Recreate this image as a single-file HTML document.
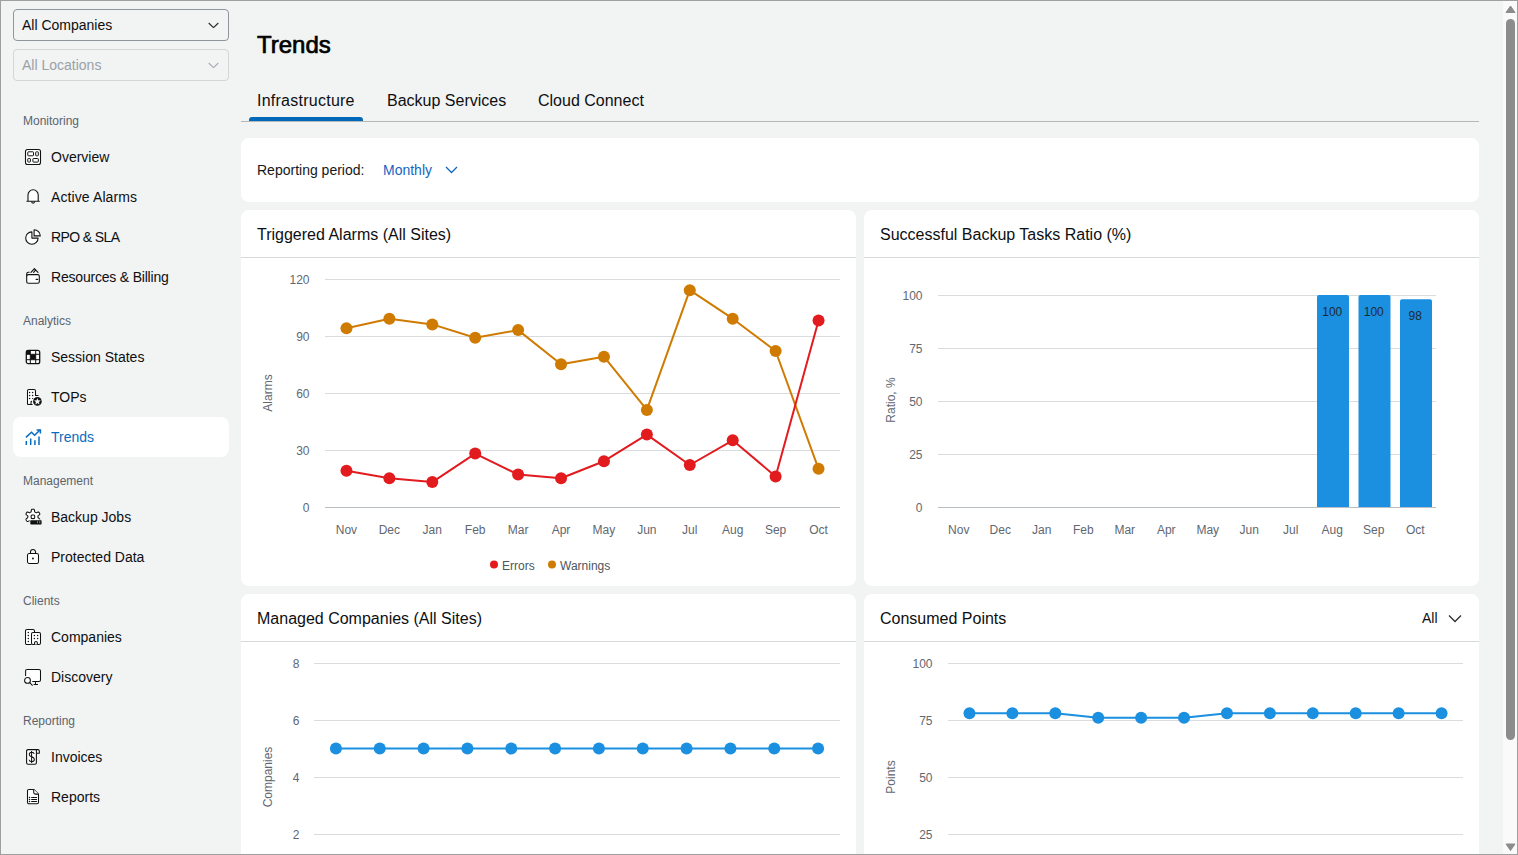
<!DOCTYPE html>
<html><head><meta charset="utf-8"><title>Trends</title>
<style>
html,body{margin:0;padding:0;}
body{width:1518px;height:855px;overflow:hidden;background:#f2f3f3;font-family:"Liberation Sans", sans-serif;color:#0d0f11;position:relative;}
.abs{position:absolute;}
.frame{position:absolute;left:0;top:0;width:1518px;height:855px;box-sizing:border-box;border:1px solid #9f9f9f;pointer-events:none;z-index:10;}
.sb{position:absolute;left:1503px;top:1px;width:14px;height:853px;background:#fafafa;}
.thumb{position:absolute;left:3px;top:18px;width:9px;height:721px;background:#8c8c8c;border-radius:5px;}
.dd{position:absolute;left:13px;width:216px;height:32px;box-sizing:border-box;border:1px solid #8f969b;border-radius:4px;font-size:14px;}
.dd span{position:absolute;left:8px;top:7px;line-height:16px;}
.dd svg{position:absolute;left:194px;top:11px;}
.hd{position:absolute;left:23px;height:20px;line-height:22px;font-size:12px;color:#5b646d;}
.it{position:absolute;left:13px;width:216px;height:40px;font-size:14px;color:#0d0f11;border-radius:8px;}
.it.act{background:#fff;color:#0a6cbf;}
.it .ic{position:absolute;left:12px;top:12px;overflow:visible;}
.it span{position:absolute;left:38px;top:11px;line-height:18px;}
.card{position:absolute;background:#fff;border-radius:8px;}
.card .hdr{position:absolute;left:0;top:0;right:0;height:47px;border-bottom:1px solid #d6dadd;}
.card .ttl{position:absolute;left:16px;top:16px;font-size:16px;line-height:18px;color:#0d0f11;}
.ax{font-family:"Liberation Sans", sans-serif;font-size:12px;fill:#5f6771;}
.lg{font-family:"Liberation Sans", sans-serif;font-size:12px;fill:#4d5560;}
.bl{font-family:"Liberation Sans", sans-serif;font-size:12px;fill:#1f2a36;}
.tab{position:absolute;top:91px;font-size:16px;line-height:20px;color:#0d0f11;}
</style></head>
<body>
<!-- sidebar -->
<div class="dd" style="top:9px"><span>All Companies</span><svg width="12" height="7" viewBox="0 0 12 7"><path d="M0.7,2 L5.5,6.6 L10.3,2" fill="none" stroke="#2a2f33" stroke-width="1.2"/></svg></div>
<div class="dd" style="top:49px;border-color:#d2d6d9;color:#9aa1a7"><span>All Locations</span><svg width="12" height="7" viewBox="0 0 12 7"><path d="M0.7,2 L5.5,6.6 L10.3,2" fill="none" stroke="#a9afb4" stroke-width="1.2"/></svg></div>
<div class="hd" style="top:110px">Monitoring</div>
<div class="it" style="top:137px"><svg class="ic" width="16" height="16" viewBox="0 0 16 16"><rect x="0.5" y="0.5" width="15" height="15" rx="2" fill="#fff" stroke="#111" stroke-width="1.1"/><rect x="2.8" y="2.8" width="5.7" height="4" rx="0.6" fill="#fff" stroke="#111"/><rect x="10.7" y="2.8" width="2.6" height="4" rx="0.6" fill="#fff" stroke="#111"/><rect x="2.8" y="9.5" width="2.6" height="3.6" rx="0.6" fill="#fff" stroke="#111"/><rect x="7.9" y="9.5" width="5.4" height="3.6" rx="0.6" fill="#fff" stroke="#111"/></svg><span>Overview</span></div>
<div class="it" style="top:177px"><svg class="ic" width="16" height="16" viewBox="0 0 16 16"><path d="M3,11.4 V5.9 A5.1,5.1 0 0 1 13.2,5.9 V11.4 Q13.2,12.2 14.3,12.2 H1.9 Q3,12.2 3,11.4 Z" fill="#fff" stroke="#111" stroke-width="1.1" stroke-linejoin="round"/><path d="M6.6,12.6 A1.5,1.6 0 0 0 9.6,12.6" fill="none" stroke="#111" stroke-width="1.1"/></svg><span style="letter-spacing:0.1px">Active Alarms</span></div>
<div class="it" style="top:217px"><svg class="ic" width="16" height="16" viewBox="0 0 16 16"><path d="M6.9,2.9 V9.1 H13.1 A6.2,6.2 0 1 1 6.9,2.9 Z" fill="#fff" stroke="#111" stroke-width="1.1" stroke-linejoin="round"/><path d="M9.1,0.7 V6.9 H15.3 A6.2,6.2 0 0 0 9.1,0.7 Z" fill="#fff" stroke="#111" stroke-width="1.1" stroke-linejoin="round"/></svg><span style="letter-spacing:-0.6px">RPO &amp; SLA</span></div>
<div class="it" style="top:257px"><svg class="ic" width="16" height="16" viewBox="0 0 16 16"><rect x="1.7" y="5.6" width="12.6" height="8.7" rx="1.6" fill="#fff" stroke="#111" stroke-width="1.1"/><path d="M1.7,7.2 V5 Q1.7,3.3 3.4,3.3 H4.6" fill="none" stroke="#111" stroke-width="1.1"/><path d="M6,3.3 L9.4,-0.4 L13,3.3 M8.6,3.3 L10.3,1.3" fill="none" stroke="#111" stroke-width="1.1" stroke-linecap="round" stroke-linejoin="round"/><path d="M11.3,10.4 H12.6" stroke="#111" stroke-width="1.3" stroke-linecap="round"/></svg><span style="letter-spacing:-0.2px">Resources &amp; Billing</span></div>
<div class="hd" style="top:310px">Analytics</div>
<div class="it" style="top:337px"><svg class="ic" width="16" height="16" viewBox="0 0 16 16"><rect x="1.3" y="1.3" width="13.4" height="13.4" rx="2" fill="#fff" stroke="#111" stroke-width="1.3"/><rect x="1.3" y="1.3" width="3.9" height="3.9" fill="#111"/><rect x="5.5" y="5.5" width="5" height="5" fill="#111"/><path d="M5.3,1.3 V14.7 M10.7,1.3 V14.7 M1.3,5.3 H14.7 M1.3,10.7 H14.7" stroke="#111" stroke-width="1"/></svg><span>Session States</span></div>
<div class="it" style="top:377px"><svg class="ic" width="16" height="16" viewBox="0 0 16 16"><path d="M2.5,15.5 V2 Q2.5,0.5 4,0.5 H9 Q10.5,0.5 10.5,2 V6.5 H13.5" fill="#fff" stroke="#111" stroke-width="1.05"/><path d="M2.5,15.5 H7.5 M6,15.5 V13.2 Q6,12.3 7,12.3" fill="none" stroke="#111" stroke-width="1.05"/><circle cx="4.6" cy="3.6" r="0.75" fill="#111"/><circle cx="7.6" cy="3.6" r="0.75" fill="#111"/><circle cx="4.6" cy="6.5" r="0.75" fill="#111"/><circle cx="7.6" cy="6.5" r="0.75" fill="#111"/><circle cx="4.6" cy="9.5" r="0.75" fill="#111"/><circle cx="7.6" cy="9.5" r="0.6" fill="#111"/><circle cx="12.4" cy="12.4" r="4.3" fill="#111"/><path d="M12.40,9.40 L13.19,11.51 L15.44,11.61 L13.68,13.02 L14.28,15.19 L12.40,13.95 L10.52,15.19 L11.12,13.02 L9.36,11.61 L11.61,11.51 Z" fill="#fff" stroke="#fff" stroke-width="0.3" stroke-linejoin="round"/></svg><span>TOPs</span></div>
<div class="it act" style="top:417px"><svg class="ic" width="16" height="16" viewBox="0 0 16 16"><path d="M0.9,8.4 L6.5,3.2 L9.6,6.3 L15,1" fill="none" stroke="#0a6cbf" stroke-width="1.5"/><path d="M11.6,0.9 H15.4 V4.6" fill="none" stroke="#0a6cbf" stroke-width="1.5"/><path d="M1.3,12 V16 M5.7,9.4 V16 M9.9,11.2 V16 M14,7.4 V16" stroke="#0a6cbf" stroke-width="1.5"/></svg><span>Trends</span></div>
<div class="hd" style="top:470px">Management</div>
<div class="it" style="top:497px"><svg class="ic" width="16" height="16" viewBox="0 0 16 16"><path d="M7.90,0.15 L8.39,0.17 L8.88,0.27 L9.31,0.60 L9.53,1.61 L9.62,2.63 L9.85,2.98 L10.14,3.16 L10.43,3.33 L10.71,3.49 L11.01,3.65 L11.43,3.67 L12.35,3.25 L13.34,2.93 L13.85,3.14 L14.17,3.51 L14.44,3.93 L14.66,4.36 L14.82,4.83 L14.76,5.37 L13.99,6.07 L13.16,6.65 L12.96,7.03 L12.95,7.37 L12.95,7.70 L12.95,8.03 L12.96,8.37 L13.16,8.75 L13.99,9.33 L14.76,10.03 L14.82,10.57 L14.66,11.04 L14.44,11.47 L14.17,11.89 L13.85,12.26 L13.34,12.47 L12.35,12.15 L11.43,11.73 L11.01,11.75 L10.71,11.91 L10.43,12.07 L10.14,12.24 L9.85,12.42 L9.62,12.77 L9.53,13.79 L9.31,14.80 L8.88,15.13 L8.39,15.23 L7.90,15.25 L7.41,15.23 L6.92,15.13 L6.49,14.80 L6.27,13.79 L6.18,12.77 L5.95,12.42 L5.66,12.24 L5.38,12.07 L5.09,11.91 L4.79,11.75 L4.37,11.73 L3.45,12.15 L2.46,12.47 L1.95,12.26 L1.63,11.89 L1.36,11.48 L1.14,11.04 L0.98,10.57 L1.04,10.03 L1.81,9.33 L2.64,8.75 L2.84,8.37 L2.85,8.03 L2.85,7.70 L2.85,7.37 L2.84,7.03 L2.64,6.65 L1.81,6.07 L1.04,5.37 L0.98,4.83 L1.14,4.36 L1.36,3.92 L1.63,3.51 L1.95,3.14 L2.46,2.93 L3.45,3.25 L4.37,3.67 L4.79,3.65 L5.09,3.49 L5.37,3.33 L5.66,3.16 L5.95,2.98 L6.18,2.63 L6.27,1.61 L6.49,0.60 L6.92,0.27 L7.41,0.17 Z" fill="#fff" stroke="#111" stroke-width="1.05" stroke-linejoin="round"/><rect x="6.1" y="6" width="3.6" height="3.6" rx="1" fill="#fff" stroke="#111" stroke-width="1.05"/><rect x="4.6" y="10.6" width="12.4" height="5.4" rx="0.8" fill="#f2f3f3"/><rect x="5.3" y="11.2" width="11.3" height="4.2" rx="0.6" fill="#111"/><rect x="12.1" y="12.3" width="0.7" height="1.8" fill="#bbb"/><rect x="14.2" y="12.3" width="1.1" height="1.8" fill="#888"/></svg><span>Backup Jobs</span></div>
<div class="it" style="top:537px"><svg class="ic" width="16" height="16" viewBox="0 0 16 16"><rect x="2.5" y="4.5" width="11" height="10" rx="1.7" fill="#fff" stroke="#111" stroke-width="1.05"/><path d="M5.5,4.5 V3 A2.5,2.5 0 0 1 10.5,3 V4.5" fill="none" stroke="#111" stroke-width="1.05"/><circle cx="7.95" cy="9.5" r="0.95" fill="#111"/></svg><span>Protected Data</span></div>
<div class="hd" style="top:590px">Clients</div>
<div class="it" style="top:617px"><svg class="ic" width="16" height="16" viewBox="0 0 16 16"><path d="M6.5,15.5 H2 Q0.5,15.5 0.5,14 V2 Q0.5,0.5 2,0.5 H8 Q9.5,0.5 9.5,2 V3.5" fill="#fff" stroke="#111" stroke-width="1.05"/><rect x="6.5" y="3.5" width="9" height="12" rx="1.5" fill="#fff" stroke="#111" stroke-width="1.05"/><path d="M9.6,15.5 V13.6 Q9.6,12.4 10.95,12.4 Q12.3,12.4 12.3,13.6 V15.5" fill="#fff" stroke="#111" stroke-width="1.05"/><circle cx="3.3" cy="3.6" r="0.75" fill="#111"/><circle cx="3.3" cy="6.6" r="0.75" fill="#111"/><circle cx="3.3" cy="9.6" r="0.75" fill="#111"/><circle cx="3.3" cy="12.6" r="0.75" fill="#111"/><circle cx="9.4" cy="6.6" r="0.75" fill="#111"/><circle cx="12.6" cy="6.6" r="0.75" fill="#111"/><circle cx="9.4" cy="9.6" r="0.75" fill="#111"/><circle cx="12.6" cy="9.6" r="0.75" fill="#111"/></svg><span>Companies</span></div>
<div class="it" style="top:657px"><svg class="ic" width="16" height="16" viewBox="0 0 16 16"><path d="M0.6,7 V2 Q0.6,0.5 2.1,0.5 H14 Q15.5,0.5 15.5,2 V11 Q15.5,12.5 14,12.5 H7.3" fill="#fff" stroke="#111" stroke-width="1.05"/><path d="M10.5,12.5 V15.5 M8.6,15.5 H13" stroke="#111" stroke-width="1.05"/><circle cx="2.5" cy="11.4" r="2.9" fill="#fff" stroke="#111" stroke-width="1.05"/><path d="M4.7,13.6 L7.4,16.3" stroke="#111" stroke-width="1.05" stroke-linecap="round"/></svg><span>Discovery</span></div>
<div class="hd" style="top:710px">Reporting</div>
<div class="it" style="top:737px"><svg class="ic" width="16" height="16" viewBox="0 0 16 16"><path d="M11.4,4.2 V13.8 Q11.4,15.3 9.9,15.3 H3.1 Q1.6,15.3 1.6,13.8 V2.1 Q1.6,0.6 3.1,0.6 H12.8 Q14.3,0.6 14.3,2.1 V4.2 H11.4 V0.6" fill="#fff" stroke="#111" stroke-width="1.1" stroke-linejoin="round"/><path d="M9.2,5 Q8.9,3.3 6.6,3.3 Q4.3,3.3 4.3,5.4 Q4.3,7.1 6.6,7.7 Q9.3,8.3 9.3,10.4 Q9.3,12.6 6.6,12.6 Q4.3,12.6 4.1,10.8 M6.6,1.9 V13.9" fill="none" stroke="#111" stroke-width="1.05"/></svg><span>Invoices</span></div>
<div class="it" style="top:777px"><svg class="ic" width="16" height="16" viewBox="0 0 16 16"><path d="M2.5,2 Q2.5,0.5 4,0.5 H9 L13.5,5 V13.3 Q13.5,14.8 12,14.8 H4 Q2.5,14.8 2.5,13.3 Z" fill="#fff" stroke="#111" stroke-width="1.05" stroke-linejoin="round"/><path d="M8.7,0.5 V3.5 Q8.7,5.1 10.3,5.1 H13.5" fill="#fff" stroke="#111" stroke-width="1.05"/><circle cx="4.5" cy="8.5" r="0.75" fill="#111"/><circle cx="4.5" cy="10.5" r="0.75" fill="#111"/><circle cx="4.5" cy="12.5" r="0.75" fill="#111"/><path d="M6.6,8.5 H11.6 M6.6,10.5 H11.6 M6.6,12.5 H11.6" stroke="#111" stroke-width="1.05" stroke-linecap="round"/></svg><span>Reports</span></div>

<!-- main -->
<div class="abs" style="left:257px;top:31px;font-size:24px;font-weight:normal;line-height:28px;color:#000;-webkit-text-stroke:0.7px #000">Trends</div>
<div class="tab" style="left:257px;letter-spacing:0.25px">Infrastructure</div>
<div class="tab" style="left:387px">Backup Services</div>
<div class="tab" style="left:538px">Cloud Connect</div>
<div class="abs" style="left:241px;top:121px;width:1238px;height:1px;background:#b3b8bb"></div>
<div class="abs" style="left:249px;top:117px;width:114px;height:4px;background:#0068b8;border-radius:3px 3px 0 0"></div>

<div class="card" style="left:241px;top:138px;width:1238px;height:64px">
  <div class="abs" style="left:16px;top:23px;font-size:14px;line-height:18px;color:#15181b">Reporting period:</div>
  <div class="abs" style="left:142px;top:23px;font-size:14px;line-height:18px;color:#1565c0">Monthly</div>
  <svg class="abs" style="left:204px;top:28px" width="13" height="8" viewBox="0 0 13 8"><path d="M1,1 L6.5,6.5 L12,1" fill="none" stroke="#1565c0" stroke-width="1.3"/></svg>
</div>

<div class="card" style="left:241px;top:210px;width:615px;height:376px"><div class="hdr"></div><div class="ttl">Triggered Alarms (All Sites)</div></div>
<div class="card" style="left:864px;top:210px;width:615px;height:376px"><div class="hdr"></div><div class="ttl">Successful Backup Tasks Ratio (%)</div></div>
<div class="card" style="left:241px;top:594px;width:615px;height:300px"><div class="hdr"></div><div class="ttl">Managed Companies (All Sites)</div></div>
<div class="card" style="left:864px;top:594px;width:615px;height:300px"><div class="hdr"></div><div class="ttl">Consumed Points</div>
  <div class="abs" style="left:558px;top:15px;font-size:14px;line-height:18px;color:#0d0f11">All</div>
  <svg class="abs" style="left:584px;top:20px" width="14" height="9" viewBox="0 0 14 9"><path d="M1,1.5 L7,7.5 L13,1.5" fill="none" stroke="#2a2f33" stroke-width="1.3"/></svg>
</div>

<svg class="abs" style="left:0;top:0" width="1518" height="855" viewBox="0 0 1518 855">
<line x1="325" y1="279.5" x2="840" y2="279.5" stroke="#d8dcdf" stroke-width="1"/>
<text x="309.5" y="283.5" text-anchor="end" class="ax">120</text>
<line x1="325" y1="336.5" x2="840" y2="336.5" stroke="#d8dcdf" stroke-width="1"/>
<text x="309.5" y="340.5" text-anchor="end" class="ax">90</text>
<line x1="325" y1="393.5" x2="840" y2="393.5" stroke="#d8dcdf" stroke-width="1"/>
<text x="309.5" y="397.5" text-anchor="end" class="ax">60</text>
<line x1="325" y1="450.5" x2="840" y2="450.5" stroke="#d8dcdf" stroke-width="1"/>
<text x="309.5" y="454.5" text-anchor="end" class="ax">30</text>
<line x1="325" y1="507.5" x2="840" y2="507.5" stroke="#d8dcdf" stroke-width="1"/>
<text x="309.5" y="511.5" text-anchor="end" class="ax">0</text>
<line x1="325" y1="507.5" x2="840" y2="507.5" stroke="#b9bec2" stroke-width="1"/>
<text x="346.46" y="534" text-anchor="middle" class="ax">Nov</text>
<text x="389.38" y="534" text-anchor="middle" class="ax">Dec</text>
<text x="432.29" y="534" text-anchor="middle" class="ax">Jan</text>
<text x="475.21" y="534" text-anchor="middle" class="ax">Feb</text>
<text x="518.12" y="534" text-anchor="middle" class="ax">Mar</text>
<text x="561.04" y="534" text-anchor="middle" class="ax">Apr</text>
<text x="603.96" y="534" text-anchor="middle" class="ax">May</text>
<text x="646.88" y="534" text-anchor="middle" class="ax">Jun</text>
<text x="689.79" y="534" text-anchor="middle" class="ax">Jul</text>
<text x="732.71" y="534" text-anchor="middle" class="ax">Aug</text>
<text x="775.62" y="534" text-anchor="middle" class="ax">Sep</text>
<text x="818.54" y="534" text-anchor="middle" class="ax">Oct</text>
<polyline points="346.46,328.2 389.38,318.7 432.29,324.4 475.21,337.7 518.12,330.1 561.04,364.3 603.96,356.7 646.88,409.9 689.79,290.2 732.71,318.7 775.62,351 818.54,468.8" fill="none" stroke="#cf7b02" stroke-width="2" stroke-linejoin="round"/>
<circle cx="346.46" cy="328.2" r="6" fill="#cf7b02"/>
<circle cx="389.38" cy="318.7" r="6" fill="#cf7b02"/>
<circle cx="432.29" cy="324.4" r="6" fill="#cf7b02"/>
<circle cx="475.21" cy="337.7" r="6" fill="#cf7b02"/>
<circle cx="518.12" cy="330.1" r="6" fill="#cf7b02"/>
<circle cx="561.04" cy="364.3" r="6" fill="#cf7b02"/>
<circle cx="603.96" cy="356.7" r="6" fill="#cf7b02"/>
<circle cx="646.88" cy="409.9" r="6" fill="#cf7b02"/>
<circle cx="689.79" cy="290.2" r="6" fill="#cf7b02"/>
<circle cx="732.71" cy="318.7" r="6" fill="#cf7b02"/>
<circle cx="775.62" cy="351" r="6" fill="#cf7b02"/>
<circle cx="818.54" cy="468.8" r="6" fill="#cf7b02"/>
<polyline points="346.46,470.7 389.38,478.3 432.29,482.1 475.21,453.6 518.12,474.5 561.04,478.3 603.96,461.2 646.88,434.6 689.79,465 732.71,440.3 775.62,476.4 818.54,320.6" fill="none" stroke="#e21b1f" stroke-width="2" stroke-linejoin="round"/>
<circle cx="346.46" cy="470.7" r="6" fill="#e21b1f"/>
<circle cx="389.38" cy="478.3" r="6" fill="#e21b1f"/>
<circle cx="432.29" cy="482.1" r="6" fill="#e21b1f"/>
<circle cx="475.21" cy="453.6" r="6" fill="#e21b1f"/>
<circle cx="518.12" cy="474.5" r="6" fill="#e21b1f"/>
<circle cx="561.04" cy="478.3" r="6" fill="#e21b1f"/>
<circle cx="603.96" cy="461.2" r="6" fill="#e21b1f"/>
<circle cx="646.88" cy="434.6" r="6" fill="#e21b1f"/>
<circle cx="689.79" cy="465" r="6" fill="#e21b1f"/>
<circle cx="732.71" cy="440.3" r="6" fill="#e21b1f"/>
<circle cx="775.62" cy="476.4" r="6" fill="#e21b1f"/>
<circle cx="818.54" cy="320.6" r="6" fill="#e21b1f"/>
<text transform="translate(272,393) rotate(-90)" text-anchor="middle" class="ax">Alarms</text>
<circle cx="494" cy="564.5" r="4" fill="#e21b1f"/>
<text x="502" y="570" class="lg">Errors</text>
<circle cx="552" cy="564.5" r="4" fill="#cf7b02"/>
<text x="560" y="570" class="lg">Warnings</text>
<line x1="938" y1="295.5" x2="1436" y2="295.5" stroke="#d8dcdf" stroke-width="1"/>
<text x="922.5" y="299.5" text-anchor="end" class="ax">100</text>
<line x1="938" y1="348.5" x2="1436" y2="348.5" stroke="#d8dcdf" stroke-width="1"/>
<text x="922.5" y="352.5" text-anchor="end" class="ax">75</text>
<line x1="938" y1="401.5" x2="1436" y2="401.5" stroke="#d8dcdf" stroke-width="1"/>
<text x="922.5" y="405.5" text-anchor="end" class="ax">50</text>
<line x1="938" y1="454.5" x2="1436" y2="454.5" stroke="#d8dcdf" stroke-width="1"/>
<text x="922.5" y="458.5" text-anchor="end" class="ax">25</text>
<line x1="938" y1="507.5" x2="1436" y2="507.5" stroke="#d8dcdf" stroke-width="1"/>
<text x="922.5" y="511.5" text-anchor="end" class="ax">0</text>
<line x1="938" y1="507.5" x2="1436" y2="507.5" stroke="#b9bec2" stroke-width="1"/>
<text x="958.75" y="534" text-anchor="middle" class="ax">Nov</text>
<text x="1000.25" y="534" text-anchor="middle" class="ax">Dec</text>
<text x="1041.75" y="534" text-anchor="middle" class="ax">Jan</text>
<text x="1083.25" y="534" text-anchor="middle" class="ax">Feb</text>
<text x="1124.75" y="534" text-anchor="middle" class="ax">Mar</text>
<text x="1166.25" y="534" text-anchor="middle" class="ax">Apr</text>
<text x="1207.75" y="534" text-anchor="middle" class="ax">May</text>
<text x="1249.25" y="534" text-anchor="middle" class="ax">Jun</text>
<text x="1290.75" y="534" text-anchor="middle" class="ax">Jul</text>
<text x="1332.25" y="534" text-anchor="middle" class="ax">Aug</text>
<text x="1373.75" y="534" text-anchor="middle" class="ax">Sep</text>
<text x="1415.25" y="534" text-anchor="middle" class="ax">Oct</text>
<path d="M1317,507 V297 Q1317,295 1319,295 H1347 Q1349,295 1349,297 V507 Z" fill="#1b8fe0"/>
<text x="1332.25" y="316" text-anchor="middle" class="bl">100</text>
<path d="M1358.5,507 V297 Q1358.5,295 1360.5,295 H1388.5 Q1390.5,295 1390.5,297 V507 Z" fill="#1b8fe0"/>
<text x="1373.75" y="316" text-anchor="middle" class="bl">100</text>
<path d="M1400,507 V301.24 Q1400,299.24 1402,299.24 H1430 Q1432,299.24 1432,301.24 V507 Z" fill="#1b8fe0"/>
<text x="1415.25" y="320.24" text-anchor="middle" class="bl">98</text>
<text transform="translate(895,400) rotate(-90)" text-anchor="middle" class="ax">Ratio, %</text>
<line x1="314" y1="663.5" x2="840" y2="663.5" stroke="#d8dcdf" stroke-width="1"/>
<text x="299.5" y="667.5" text-anchor="end" class="ax">8</text>
<line x1="314" y1="720.5" x2="840" y2="720.5" stroke="#d8dcdf" stroke-width="1"/>
<text x="299.5" y="724.5" text-anchor="end" class="ax">6</text>
<line x1="314" y1="777.5" x2="840" y2="777.5" stroke="#d8dcdf" stroke-width="1"/>
<text x="299.5" y="781.5" text-anchor="end" class="ax">4</text>
<line x1="314" y1="834.5" x2="840" y2="834.5" stroke="#d8dcdf" stroke-width="1"/>
<text x="299.5" y="838.5" text-anchor="end" class="ax">2</text>
<polyline points="335.92,748.6 379.75,748.6 423.58,748.6 467.42,748.6 511.25,748.6 555.08,748.6 598.92,748.6 642.75,748.6 686.58,748.6 730.42,748.6 774.25,748.6 818.08,748.6" fill="none" stroke="#1b8fe0" stroke-width="2" stroke-linejoin="round"/>
<circle cx="335.92" cy="748.6" r="6" fill="#1b8fe0"/>
<circle cx="379.75" cy="748.6" r="6" fill="#1b8fe0"/>
<circle cx="423.58" cy="748.6" r="6" fill="#1b8fe0"/>
<circle cx="467.42" cy="748.6" r="6" fill="#1b8fe0"/>
<circle cx="511.25" cy="748.6" r="6" fill="#1b8fe0"/>
<circle cx="555.08" cy="748.6" r="6" fill="#1b8fe0"/>
<circle cx="598.92" cy="748.6" r="6" fill="#1b8fe0"/>
<circle cx="642.75" cy="748.6" r="6" fill="#1b8fe0"/>
<circle cx="686.58" cy="748.6" r="6" fill="#1b8fe0"/>
<circle cx="730.42" cy="748.6" r="6" fill="#1b8fe0"/>
<circle cx="774.25" cy="748.6" r="6" fill="#1b8fe0"/>
<circle cx="818.08" cy="748.6" r="6" fill="#1b8fe0"/>
<text transform="translate(272,777) rotate(-90)" text-anchor="middle" class="ax">Companies</text>
<line x1="948" y1="663.5" x2="1463" y2="663.5" stroke="#d8dcdf" stroke-width="1"/>
<text x="932.5" y="667.5" text-anchor="end" class="ax">100</text>
<line x1="948" y1="720.5" x2="1463" y2="720.5" stroke="#d8dcdf" stroke-width="1"/>
<text x="932.5" y="724.5" text-anchor="end" class="ax">75</text>
<line x1="948" y1="777.5" x2="1463" y2="777.5" stroke="#d8dcdf" stroke-width="1"/>
<text x="932.5" y="781.5" text-anchor="end" class="ax">50</text>
<line x1="948" y1="834.5" x2="1463" y2="834.5" stroke="#d8dcdf" stroke-width="1"/>
<text x="932.5" y="838.5" text-anchor="end" class="ax">25</text>
<polyline points="969.46,713.26 1012.38,713.26 1055.29,713.26 1098.21,717.82 1141.12,717.82 1184.04,717.82 1226.96,713.26 1269.88,713.26 1312.79,713.26 1355.71,713.26 1398.62,713.26 1441.54,713.26" fill="none" stroke="#1b8fe0" stroke-width="2" stroke-linejoin="round"/>
<circle cx="969.46" cy="713.26" r="6" fill="#1b8fe0"/>
<circle cx="1012.38" cy="713.26" r="6" fill="#1b8fe0"/>
<circle cx="1055.29" cy="713.26" r="6" fill="#1b8fe0"/>
<circle cx="1098.21" cy="717.82" r="6" fill="#1b8fe0"/>
<circle cx="1141.12" cy="717.82" r="6" fill="#1b8fe0"/>
<circle cx="1184.04" cy="717.82" r="6" fill="#1b8fe0"/>
<circle cx="1226.96" cy="713.26" r="6" fill="#1b8fe0"/>
<circle cx="1269.88" cy="713.26" r="6" fill="#1b8fe0"/>
<circle cx="1312.79" cy="713.26" r="6" fill="#1b8fe0"/>
<circle cx="1355.71" cy="713.26" r="6" fill="#1b8fe0"/>
<circle cx="1398.62" cy="713.26" r="6" fill="#1b8fe0"/>
<circle cx="1441.54" cy="713.26" r="6" fill="#1b8fe0"/>
<text transform="translate(895,777) rotate(-90)" text-anchor="middle" class="ax">Points</text>
</svg>

<!-- scrollbar -->
<div class="sb"><div class="thumb"></div>
<svg class="abs" style="left:0;top:0" width="14" height="853"><path d="M3,11.5 L7.5,5 L12,11.5 Z" fill="#8c8c8c" stroke="#8c8c8c" stroke-linejoin="round" stroke-width="1"/><path d="M3,843 L7.5,849.5 L12,843 Z" fill="#8c8c8c" stroke="#8c8c8c" stroke-linejoin="round" stroke-width="1"/></svg>
</div>
<div class="frame"></div>
</body></html>
